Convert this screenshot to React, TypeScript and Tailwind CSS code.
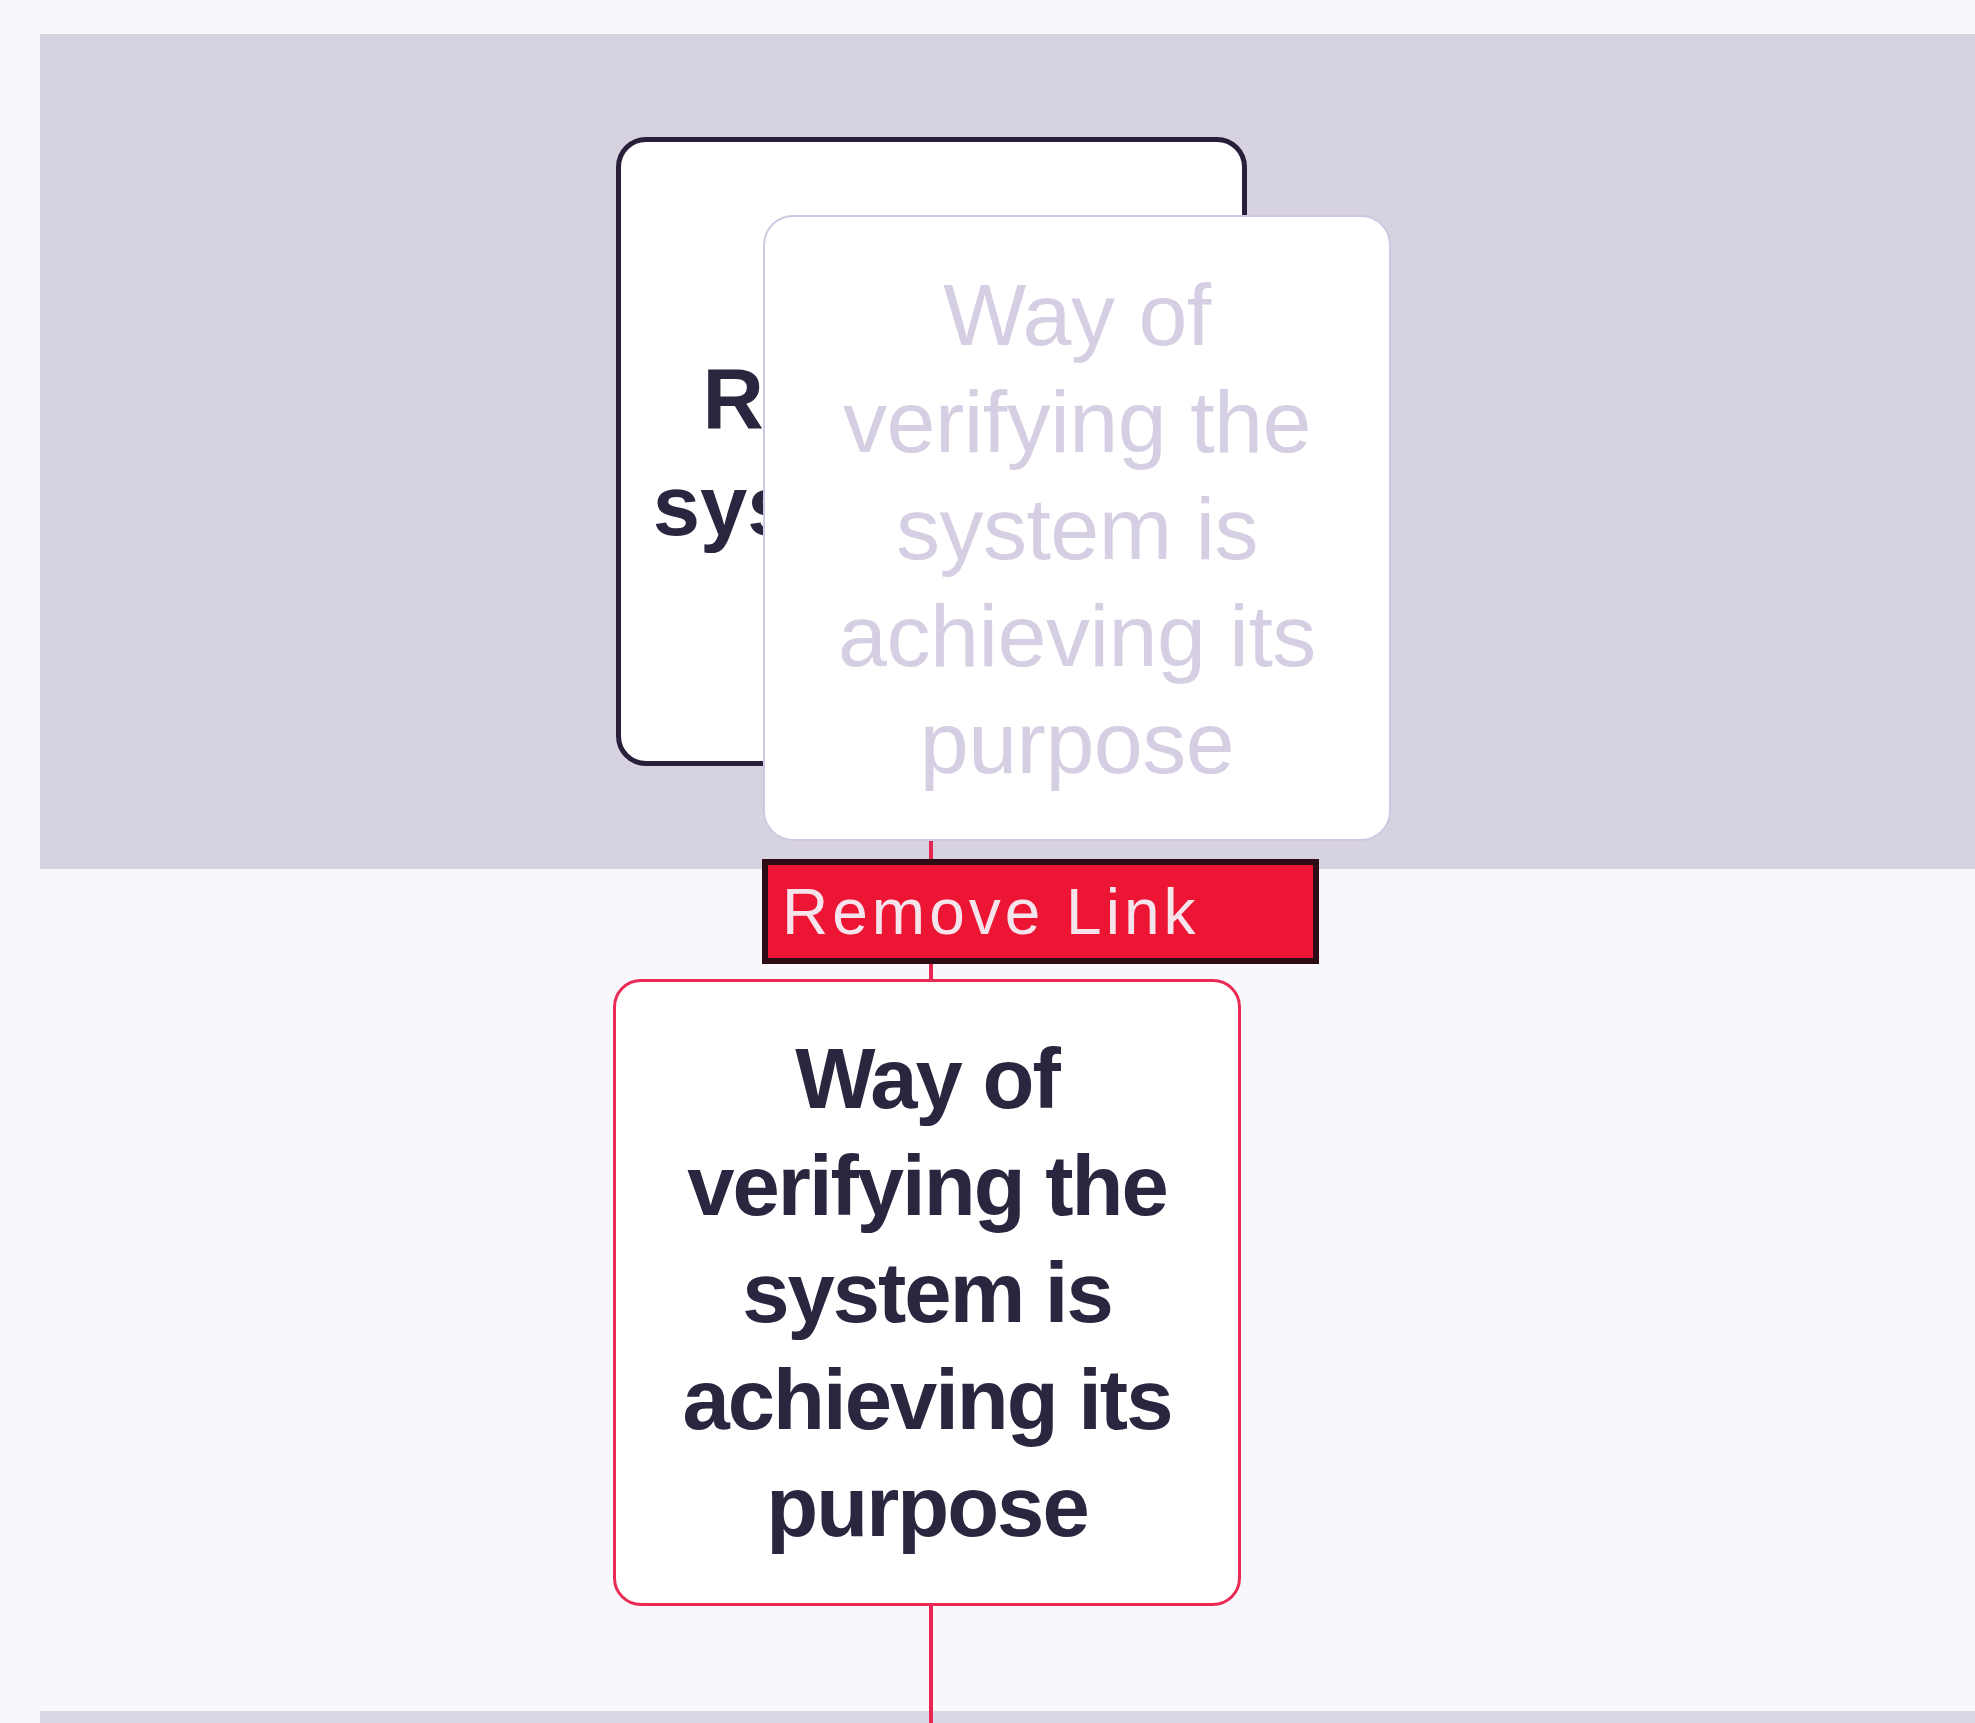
import React from 'react';

const LINES = ['Way of', 'verifying the', 'system is', 'achieving its', 'purpose'];

function NodeText({ lines, className }: { lines: string[]; className: string }) {
    return (
        <p className={`text-center leading-[107px] ${className}`}>
            {lines.map((line, i) => (
                <span key={i} className="block whitespace-nowrap">{line}</span>
            ))}
        </p>
    );
}

export default function App() {
    return (
        <div className="relative w-[1975px] h-[1723px] overflow-hidden bg-[#f7f7fc] flex flex-col font-['Liberation_Sans',Arial,sans-serif]">
            {/* swimlanes */}
            <div className="mt-[34px] ml-[40px] h-[835px] bg-[#d6d2e0]" />
            <div className="flex-1" />
            <div className="ml-[40px] h-[12px] bg-[#dcd7e6]" />

            {/* link line */}
            <div className="absolute left-[929px] top-[760px] w-[4px] h-[963px] bg-[#e62552]" />

            {/* parent node */}
            <div className="absolute left-[616px] top-[137px] w-[631px] h-[629px] rounded-[30px] border-[5px] border-[#2a1f3a] bg-white flex items-center justify-center">
                <NodeText lines={['Reason the', 'system exists']} className="text-[85px] font-bold text-[#2b2540]" />
            </div>

            {/* dragged ghost */}
            <div className="absolute left-[763px] top-[215px] w-[628px] h-[626px] rounded-[30px] border-2 border-[#cfc8e0] bg-white flex items-center justify-center">
                <NodeText lines={LINES} className="text-[88px] tracking-[-0.5px] text-[#d6cfe4]" />
            </div>

            {/* remove link tooltip */}
            <div className="absolute left-[762px] top-[859px] w-[557px] h-[105px] border-[6px] border-[#2e0c16] bg-[#ec1534] flex items-center pl-[14px]">
                <span className="text-[64px] leading-none tracking-[4px] text-[#f6e4ec] whitespace-nowrap">Remove Link</span>
            </div>

            {/* selected child node */}
            <div className="absolute left-[613px] top-[979px] w-[628px] h-[627px] rounded-[28px] border-[3px] border-[#ea2a55] bg-white flex items-center justify-center">
                <NodeText lines={LINES} className="text-[85px] font-bold tracking-[-2px] text-[#2b2540]" />
            </div>
        </div>
    );
}
